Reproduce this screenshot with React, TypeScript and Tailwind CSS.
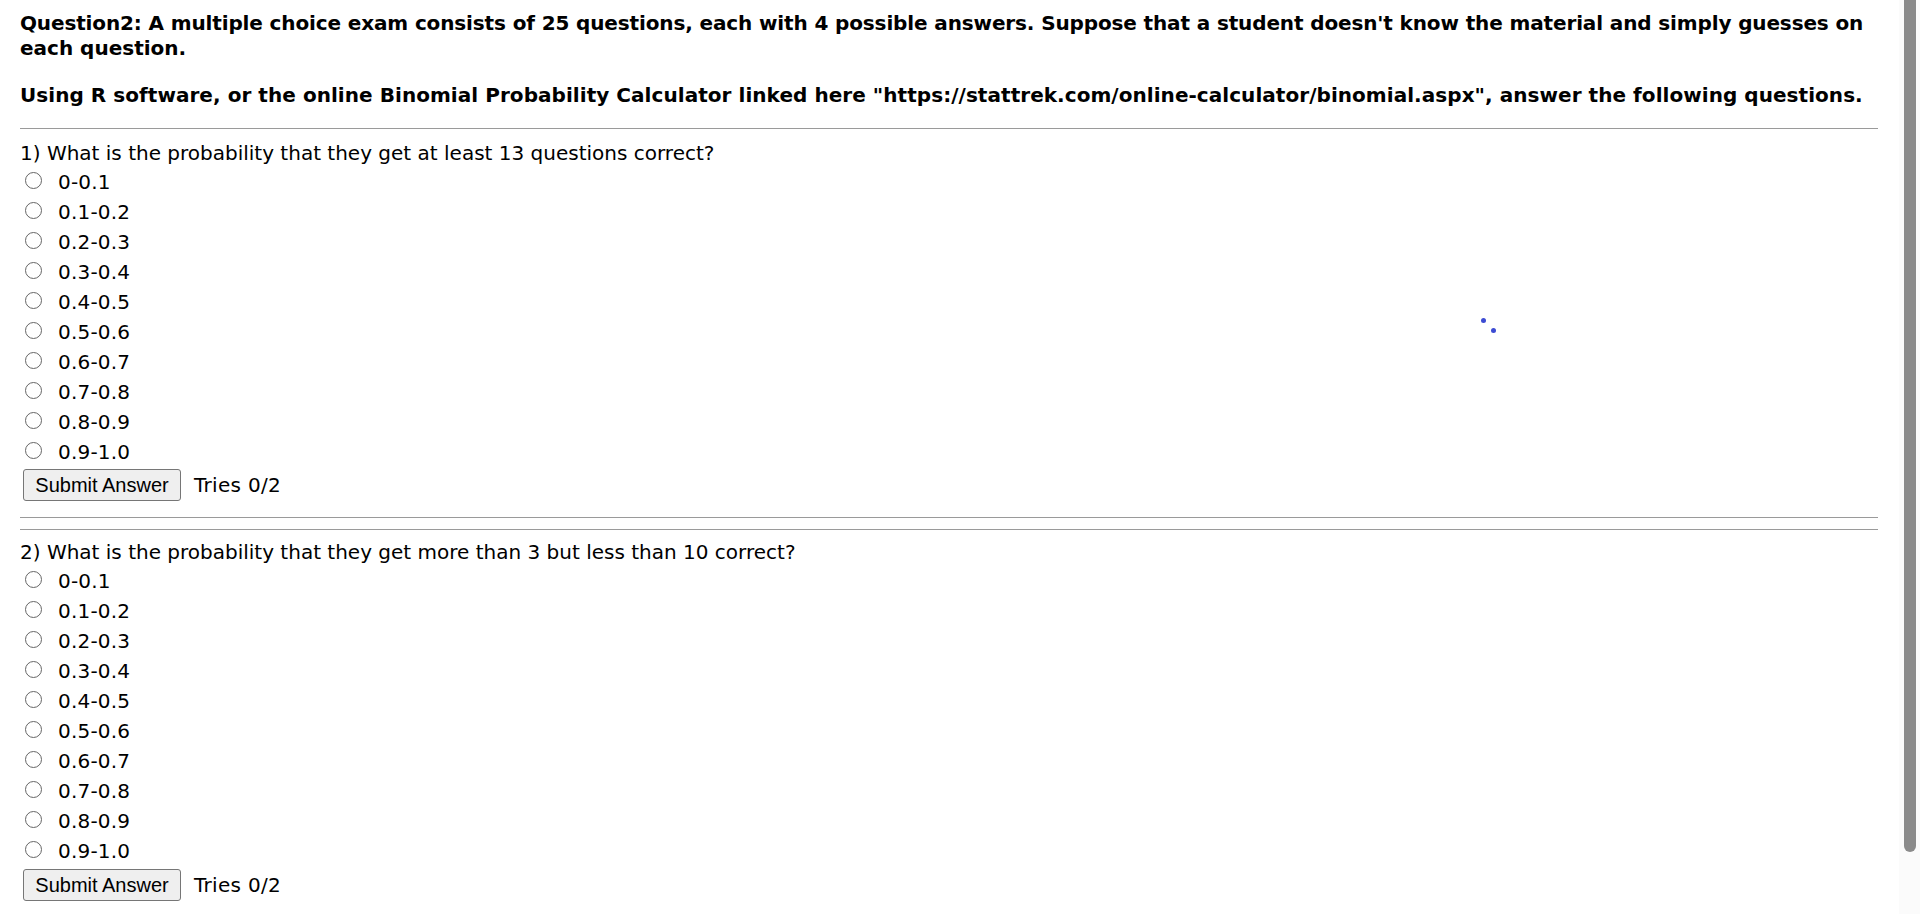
import React from "react";

const options = [
  "0-0.1",
  "0.1-0.2",
  "0.2-0.3",
  "0.3-0.4",
  "0.4-0.5",
  "0.5-0.6",
  "0.6-0.7",
  "0.7-0.8",
  "0.8-0.9",
  "0.9-1.0",
];

function Options() {
  return (
    <div className="flex flex-col">
      {options.map((o) => (
        <div key={o} className="flex h-[30px] leading-[28px]">
          <div className="mt-[4px] ml-[5px] mr-[16px] w-[17px] h-[17px] rounded-full border-[1.5px] border-[#666666] bg-white shrink-0" />
          <span className="tracking-[0.2px]">{o}</span>
        </div>
      ))}
    </div>
  );
}

function SubmitRow({ mt }: { mt: string }) {
  return (
    <div className={`flex items-center h-[32px] ${mt}`}>
      <button
        className="ml-[3px] h-[32px] w-[158px] border border-[#767676] rounded-[3px] bg-[#efefef] text-black text-[20px] leading-[30px]"
        style={{ fontFamily: '"Liberation Sans", Arial, sans-serif' }}
      >
        Submit Answer
      </button>
      <span className="ml-[13px] leading-[32px] tracking-[0.3px]">Tries 0/2</span>
    </div>
  );
}

export default function App() {
  return (
    <div
      className="relative flex w-[1920px] h-[914px] overflow-hidden bg-white text-black text-[20px]"
      style={{ fontFamily: '"DejaVu Sans", Verdana, sans-serif' }}
    >
      <main className="flex-1 pl-[20px] pr-[21px]">
        <div className="pt-[11px] font-bold leading-[25px]">
          <p className="whitespace-nowrap tracking-[-0.13px]">
            Question2: A multiple choice exam consists of 25 questions, each with 4 possible answers. Suppose that a student doesn't know the material and simply guesses on
          </p>
          <p className="whitespace-nowrap">each question.</p>
          <p className="mt-[22px] whitespace-nowrap tracking-[0.05px]">
            Using R software, or the online Binomial Probability Calculator linked here "https://stattrek.com/online-calculator/binomial.aspx", answer the following questions.
          </p>
        </div>
        <div className="mt-[20px] h-px bg-[#9a9a9a]" />
        <div className="mt-[9px] h-[30px] leading-[30px]">
          1) What is the probability that they get at least 13 questions correct?
        </div>
        <Options />
        <SubmitRow mt="mt-[1px]" />
        <div className="mt-[16px] h-px bg-[#9a9a9a]" />
        <div className="mt-[11px] h-px bg-[#9a9a9a]" />
        <div className="mt-[7px] h-[30px] leading-[30px]">
          2) What is the probability that they get more than 3 but less than 10 correct?
        </div>
        <Options />
        <SubmitRow mt="mt-[2px]" />
      </main>
      <div className="w-[21px] h-full bg-[#fbfbfb] flex justify-center">
        <div className="w-[12px] h-[852px] bg-[#8b8b8b] rounded-b-full" />
      </div>
      <div className="absolute left-[1481px] top-[318px] w-[5px] h-[5px] rounded-full bg-[#3c4bd3]" />
      <div className="absolute left-[1491px] top-[328px] w-[5px] h-[5px] rounded-full bg-[#3c4bd3]" />
    </div>
  );
}
